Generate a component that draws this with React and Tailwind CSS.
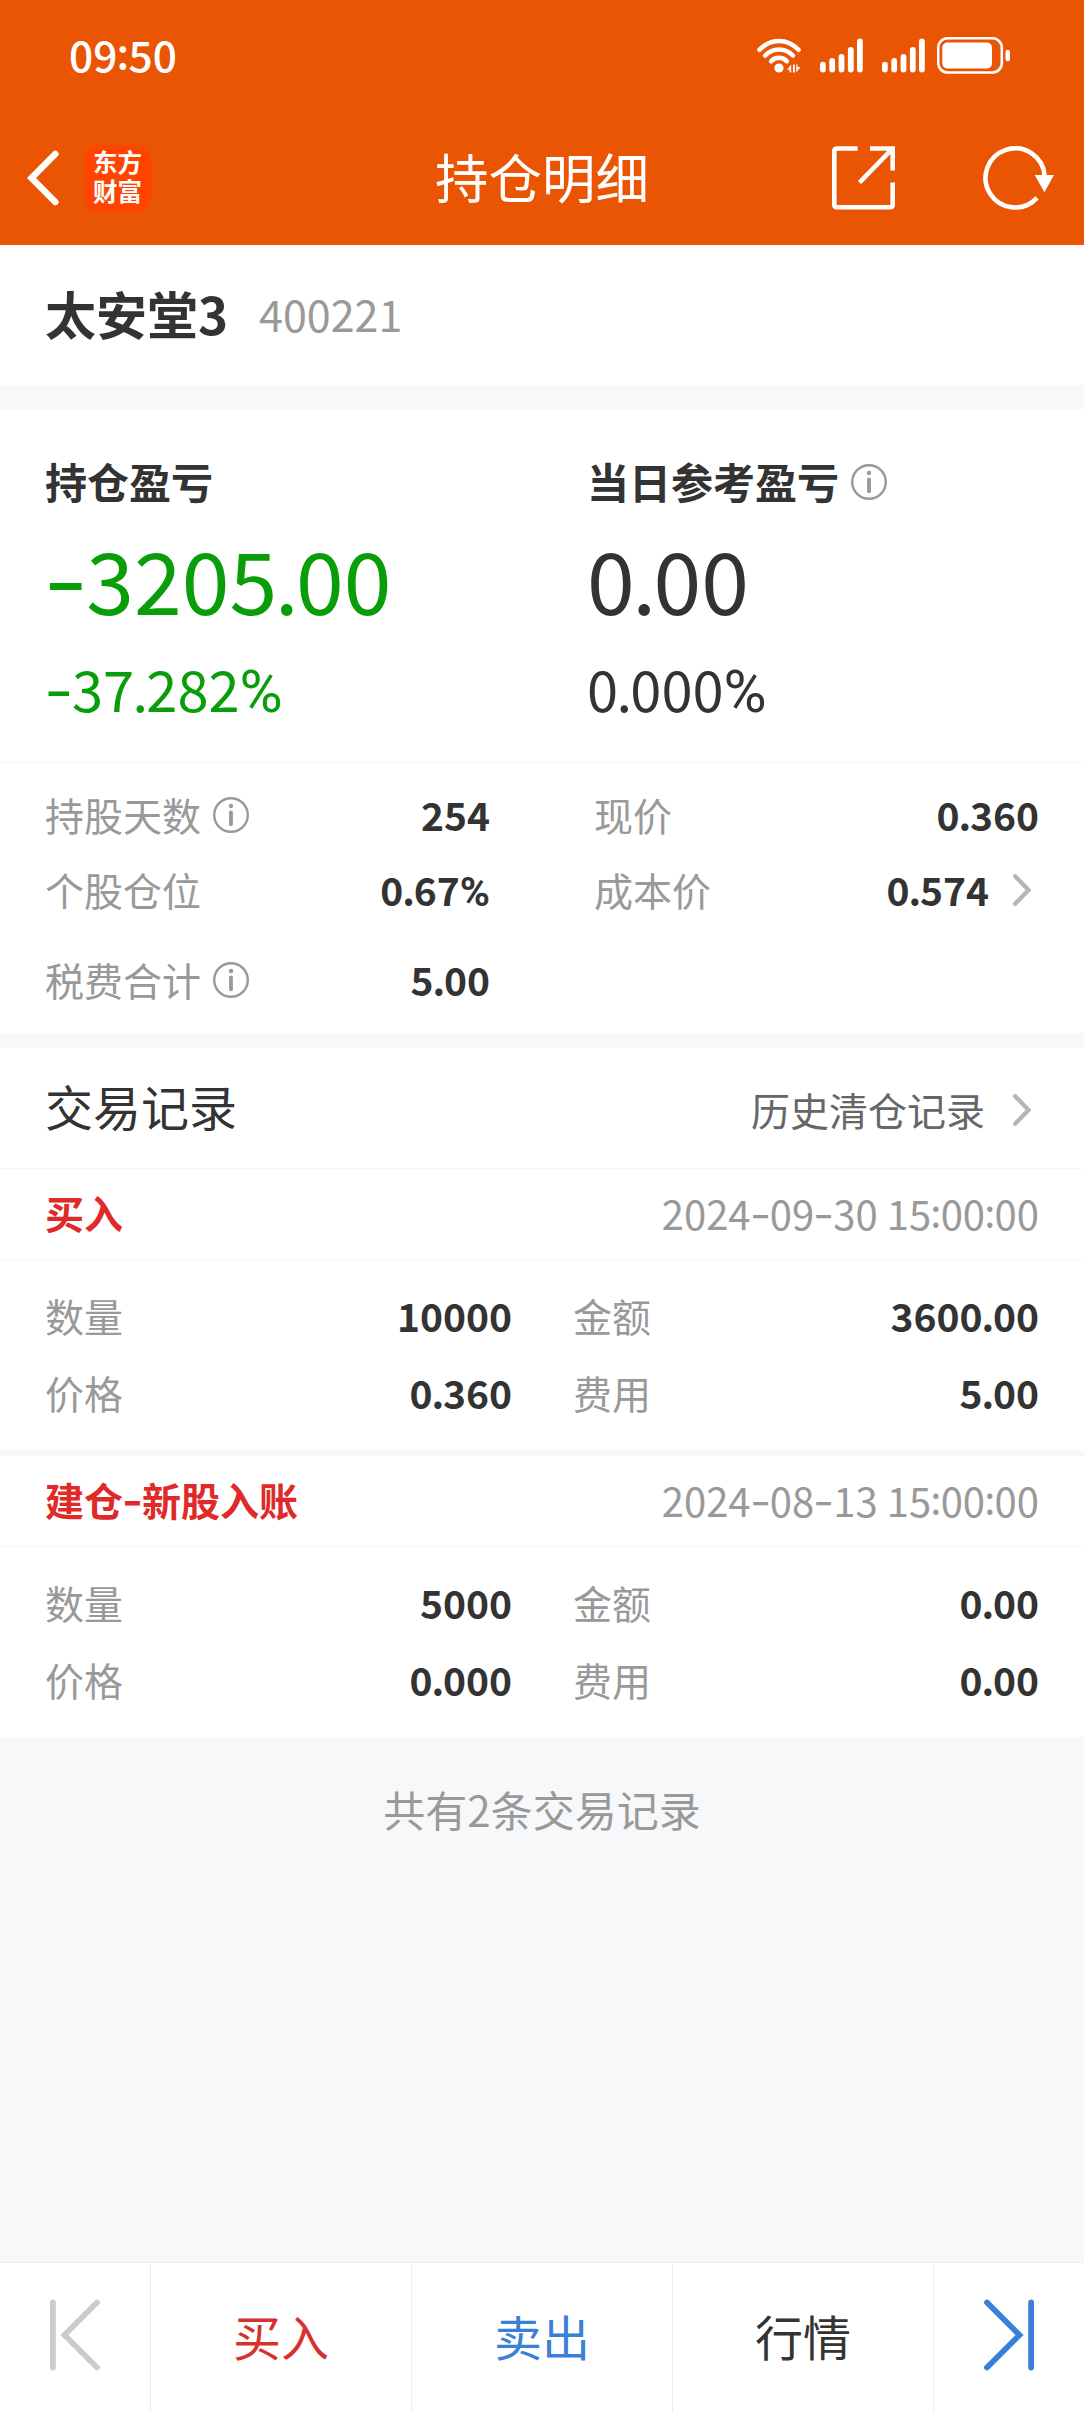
import clsx from "clsx";

const STATS = [
  [
    { label: "持股天数", value: "254", info: true },
    { label: "现价", value: "0.360" },
  ],
  [
    { label: "个股仓位", value: "0.67%" },
    { label: "成本价", value: "0.574", arrow: true },
  ],
  [{ label: "税费合计", value: "5.00", info: true }],
];

const RECORDS = [
  {
    type: "买入",
    time: "2024-09-30 15:00:00",
    fields: [
      { label: "数量", value: "10000" },
      { label: "金额", value: "3600.00" },
      { label: "价格", value: "0.360" },
      { label: "费用", value: "5.00" },
    ],
  },
  {
    type: "建仓-新股入账",
    time: "2024-08-13 15:00:00",
    fields: [
      { label: "数量", value: "5000" },
      { label: "金额", value: "0.00" },
      { label: "价格", value: "0.000" },
      { label: "费用", value: "0.00" },
    ],
  },
];

const PUNCTUATION = {
  ".": "-mx-[0.03em]",
  ":": "-mx-[0.02em] align-[0.07em] leading-0",
  "-": "-ml-[0.02em] inline-block origin-left scale-x-115 pr-[0.04em] font-['Inter'] leading-0 align-[0.02em]",
  "%": "font-['Roboto'] text-[1.05em] leading-0",
};

// Tightens the punctuation between the digits
function Num({ children, className }) {
  return (
    <span className={clsx("whitespace-nowrap", className)}>
      {children.split(/([.:%-])/).map((part, i) =>
        PUNCTUATION[part] ? (
          <span key={i} className={PUNCTUATION[part]}>
            {part}
          </span>
        ) : (
          part
        ),
      )}
    </span>
  );
}

function InfoIcon({ className }) {
  return (
    <svg viewBox="0 0 36 36" className={clsx("size-9 shrink-0", className)} fill="none" stroke="#999999">
      <circle cx="18" cy="18" r="16.8" strokeWidth="2.4" />
      <circle cx="18" cy="9" r="2.2" fill="#999999" stroke="none" />
      <path d="M18 15.3V27.3" strokeWidth="3.8" strokeLinecap="round" />
    </svg>
  );
}

function ArrowIcon({ className }) {
  return (
    <svg viewBox="0 0 18 32" className={clsx("h-8 w-[18px] shrink-0", className)} fill="none">
      <path d="M2.2 2.2L15.5 16L2.2 29.8" stroke="#b5b5b5" strokeWidth="4.2" strokeLinecap="round" />
    </svg>
  );
}

function WifiIcon() {
  return (
    <svg viewBox="0 0 44 37" className="h-[37px] w-11" fill="none" stroke="white" strokeWidth="4.6" strokeLinecap="round">
      <path d="M2.5 12.8C13.5 1 30.5 1 41.5 12.8" />
      <path d="M8.2 18.5C16 10.5 28 10.5 35.8 18.5" />
      <path d="M14.2 24.2C18.5 19.6 25.5 19.6 29.8 24.2" />
      <circle cx="22" cy="31" r="4.6" fill="white" stroke="none" />
      <path d="M30 32.8L34.2 27.5V35.5H32.6V32.8ZM36 27.5H37.8V35.5H36ZM39.2 27.5V35.5L43.6 30H40.6V27.5Z" fill="white" stroke="none" />
    </svg>
  );
}

function SignalIcon() {
  return (
    <svg viewBox="0 0 43 37" className="h-[37px] w-[43px]" fill="white">
      <rect x="0" y="24.7" width="5.8" height="10.8" rx="2.9" />
      <rect x="9.3" y="21" width="5.8" height="14.5" rx="2.9" />
      <rect x="18.6" y="17" width="5.8" height="18.5" rx="2.9" />
      <rect x="27.9" y="10" width="5.8" height="25.5" rx="2.9" />
      <rect x="37" y="1.5" width="5.8" height="34" rx="2.9" />
    </svg>
  );
}

function BatteryIcon() {
  return (
    <svg viewBox="0 0 73 37" className="h-[37px] w-[73px]" fill="white">
      <rect x="1.2" y="1.2" width="63.6" height="34.3" rx="9.5" fill="none" stroke="white" strokeWidth="2.6" />
      <rect x="5.3" y="5.5" width="49.7" height="26" rx="5" />
      <rect x="68.5" y="12.7" width="4.5" height="11.5" rx="2.2" />
    </svg>
  );
}

function StatusBar() {
  return (
    <div className="flex h-[111px] items-center pr-[74px] pl-[69px]">
      <Num className="mr-auto pb-[3px] text-[42.5px] font-medium">09:50</Num>
      <WifiIcon />
      <span className="ml-[19px] flex gap-[19px]">
        <SignalIcon />
        <SignalIcon />
      </span>
      <span className="ml-3">
        <BatteryIcon />
      </span>
    </div>
  );
}

function NavBar() {
  return (
    <div className="grid h-[134px] grid-cols-[1fr_auto_1fr] items-center">
      <div className="flex items-center gap-[25px] pl-[27px]">
        <svg viewBox="0 0 32 56" className="h-14 w-8" fill="none">
          <path d="M28.3 4L4.5 28L28.3 52" stroke="white" strokeWidth="6.5" strokeLinecap="round" />
        </svg>
        <div className="flex size-[67px] items-center justify-center rounded-[15px] bg-[#ff4400] pb-[4px]">
          <span className="w-[50px] text-center text-[24.5px] leading-[29px] font-bold break-all">东方财富</span>
        </div>
      </div>
      <h1 className="pb-[4px] text-[53.5px] leading-[80px]">持仓明细</h1>
      <div className="flex items-center justify-end gap-[88px] pr-[30px]">
        <svg viewBox="0 0 63 64" className="h-16 w-[63px]" fill="none" stroke="white" strokeWidth="4.6">
          <path d="M25.6 2.5H5Q2.3 2.5 2.3 5.2V58.5Q2.3 61.2 5 61.2H58Q60.7 61.2 60.7 58.5V36.5" />
          <path d="M38 2.5H60.7V24.5M60.5 2.7L27.5 36.5" />
        </svg>
        <svg viewBox="0 0 71 64" className="h-16 w-[71px]">
          <path d="M61.7 30A29.6 29.6 0 1 0 54 51.9" fill="none" stroke="white" strokeWidth="4.6" />
          <path d="M51.7 29H71L61.4 46.2Z" fill="white" />
        </svg>
      </div>
    </div>
  );
}

function ProfitBlock({ title, amount, percent, info, className }) {
  return (
    <div className={className}>
      <div className="flex items-center gap-3 text-[42px] leading-[60px] font-bold text-[#333333]">
        {title}
        {info && <InfoIcon className="mt-0.5" />}
      </div>
      <Num className="mt-[19px] block text-[86px] leading-[96px]">{amount}</Num>
      <Num className="mt-[30px] block text-[56px] leading-[64px]">{percent}</Num>
    </div>
  );
}

function Field({ label, value, info, arrow }) {
  return (
    <div className="flex items-center">
      <span className="text-[#999999]">{label}</span>
      {info && <InfoIcon className="mt-px ml-3" />}
      <Num className="ml-auto font-bold">{value}</Num>
      {arrow && <ArrowIcon className="mr-2 ml-6" />}
    </div>
  );
}

function Record({ type, time, fields }) {
  return (
    <section className="bg-white">
      <div className="flex h-[91px] items-center justify-between border-b border-[#f5f6f8] pr-[45px] pb-[3px] pl-[45px]">
        <Num className="text-[39px] font-bold text-[#e02a2a]">{type}</Num>
        <Num className="text-[40px] text-[#999999]">{time}</Num>
      </div>
      <div className="grid auto-rows-[77px] grid-cols-[467px_466px] gap-x-[61px] px-[45px] pt-[17px] pb-[19px] text-[39px]">
        {fields.map((field) => (
          <Field key={field.label} {...field} />
        ))}
      </div>
    </section>
  );
}

function BottomBar() {
  return (
    <footer className="grid h-[150px] grid-cols-[151px_261px_261px_261px_150px] divide-x divide-[#ebedef] border-t border-[#ebedef] bg-white text-[48px] *:flex *:items-center *:justify-center *:pb-[5px]">
      <button>
        <svg viewBox="0 0 50 72" className="h-[72px] w-[50px]" fill="none" stroke="#cccccc" strokeWidth="5.8" strokeLinecap="round">
          <path d="M2.9 3.5V68.5M47 3.5L14.5 36L47 68.5" />
        </svg>
      </button>
      <button className="text-[#d9302f]">买入</button>
      <button className="text-[#3b80d6]">卖出</button>
      <button>行情</button>
      <button>
        <svg viewBox="0 0 50 72" className="h-[72px] w-[50px]" fill="none" stroke="#3b80d8" strokeWidth="5.8" strokeLinecap="round">
          <path d="M47.1 3.5V68.5M3 3.5L35.5 36L3 68.5" />
        </svg>
      </button>
    </footer>
  );
}

export default function App() {
  return (
    <div className="flex h-[2412px] w-[1084px] flex-col bg-[#f7f8fa] font-['Noto_Sans_CJK_SC',sans-serif] text-[#333333]">
      <header className="bg-[#ea5504] text-white">
        <StatusBar />
        <NavBar />
      </header>

      <main className="flex-1">
        <section className="flex h-[140px] items-center gap-[31px] bg-white pb-[3px] pl-[45px]">
          <span className="text-[51px] font-bold">太安堂3</span>
          <Num className="text-[43px] text-[#999999]">400221</Num>
        </section>

        <section className="mt-6 bg-white">
          <div className="grid h-[354px] grid-cols-[542px_1fr] border-b border-[#f5f6f8] pt-[42px] pl-[45px]">
            <ProfitBlock title="持仓盈亏" amount="-3205.00" percent="-37.282%" className="text-[#0a9d0a]" />
            <ProfitBlock title="当日参考盈亏" amount="0.00" percent="0.000%" info />
          </div>
          <div className="grid h-[270px] grid-cols-[445px_445px] grid-rows-[75px_75px_105px] gap-x-[104px] px-[45px] pt-[14px] text-[39px]">
            {STATS.flat().map((item) => (
              <Field key={item.label} {...item} />
            ))}
          </div>
        </section>

        <section className="mt-[15px] flex h-[121px] items-center justify-between border-b border-[#f5f6f8] bg-white pr-[53px] pl-[45px]">
          <h2 className="pb-[6px] text-[48px]">交易记录</h2>
          <div className="flex items-center gap-[28px] pt-[3px] text-[39px] text-[#666666]">
            历史清仓记录
            <ArrowIcon />
          </div>
        </section>

        <div className="flex flex-col gap-1.5">
          {RECORDS.map((record) => (
            <Record key={record.time} {...record} />
          ))}
        </div>

        <p className="pt-[42px] text-center text-[42px] leading-[60px] text-[#999999]">共有2条交易记录</p>
      </main>

      <BottomBar />
    </div>
  );
}
